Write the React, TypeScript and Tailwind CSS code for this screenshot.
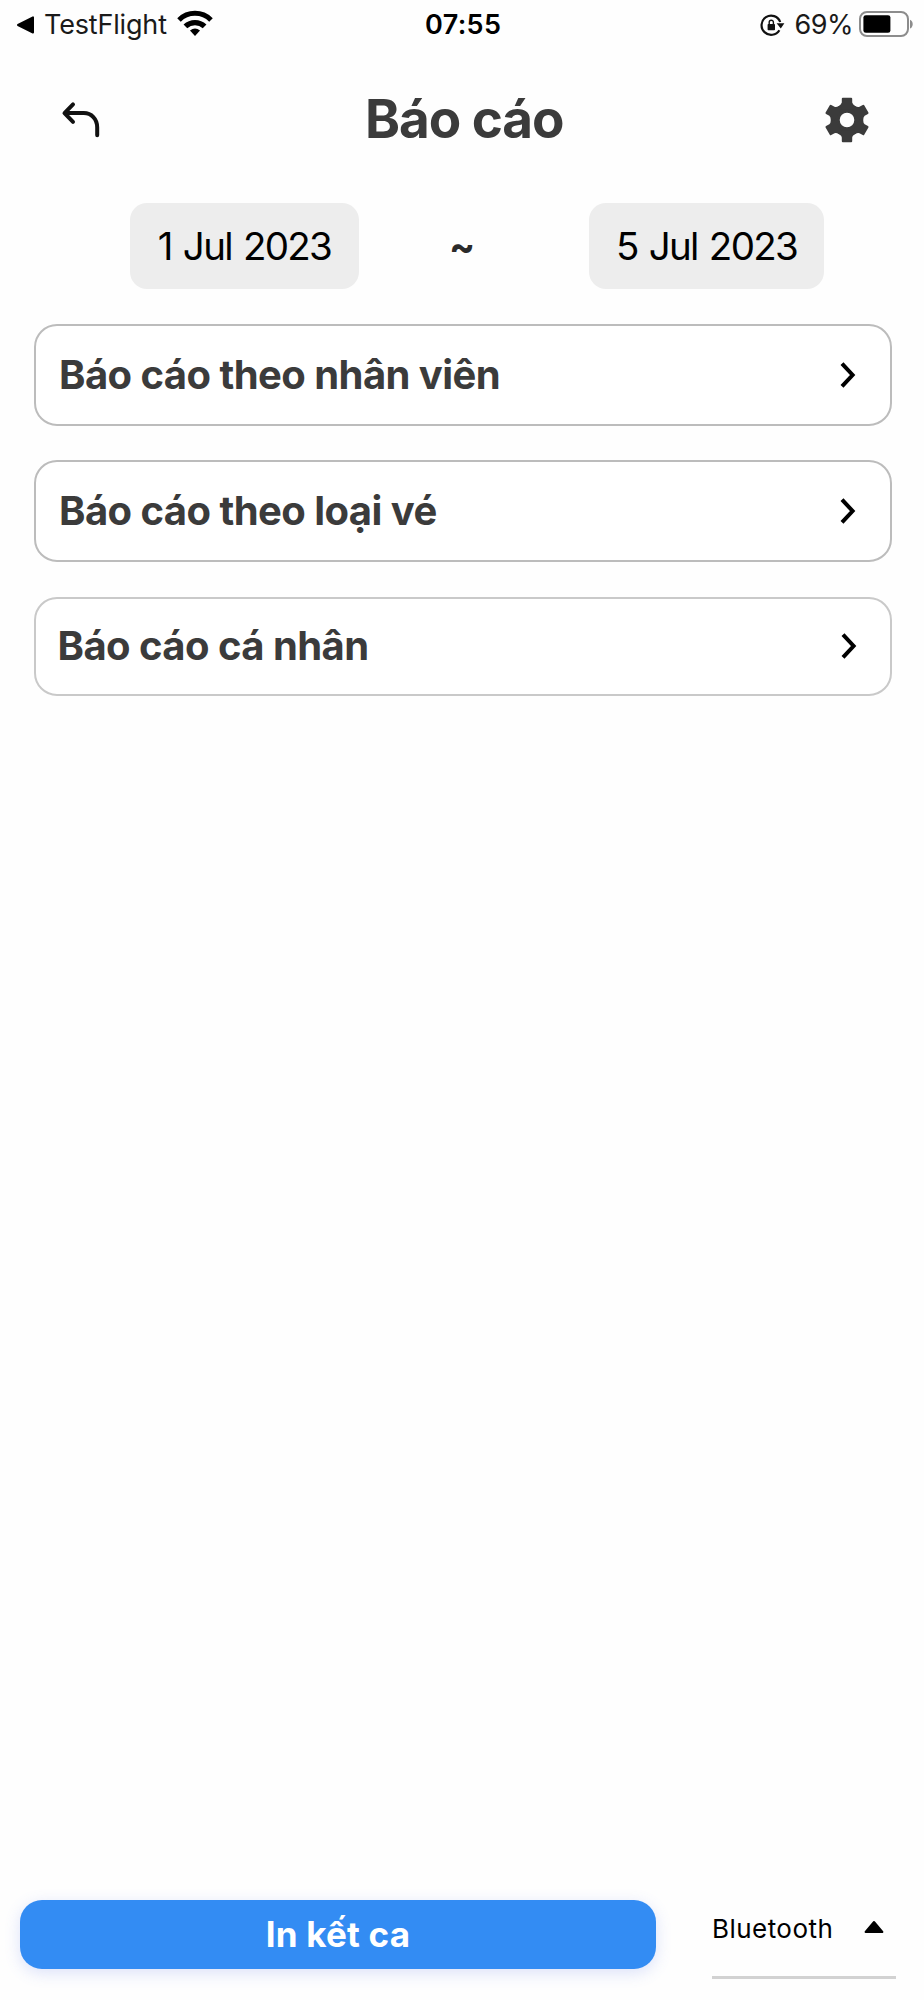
import clsx from "clsx";

interface ReportLink {
  label: string;
  height: string;
  textOffset: string;
  chevronOffset: string;
  border: string;
}

const REPORTS: ReportLink[] = [
  {
    label: "Báo cáo theo nhân viên",
    height: "h-[102px] mb-[34px]",
    textOffset: "pl-[23px]",
    chevronOffset: "mr-[33px]",
    border: "border-[#bcbcbc]",
  },
  {
    label: "Báo cáo theo loại vé",
    height: "h-[102px] mb-[35px]",
    textOffset: "pl-[23px] pt-px",
    chevronOffset: "mr-[33px]",
    border: "border-[#bcbcbc]",
  },
  {
    label: "Báo cáo cá nhân",
    height: "h-[99px]",
    textOffset: "pl-[21.5px]",
    chevronOffset: "mr-8",
    border: "border-[#c9c9c9]",
  },
];

const GEAR_TEETH = [0, 60, 120, 180, 240, 300];

function WifiIcon() {
  return (
    <svg width="36" height="28" viewBox="0 0 36 28" className="block" fill="none">
      <path d="M2 10.9A22.7 22.7 0 0 1 34 10.9" stroke="#000" strokeWidth="5" />
      <path d="M8.4 17.4A14 14 0 0 1 27.6 17.4" stroke="#000" strokeWidth="5.4" />
      <path d="M13 21.4Q18 17.6 23 21.4L18 27Z" fill="#000" />
    </svg>
  );
}

function RotationLockIcon() {
  return (
    <svg width="25" height="24" viewBox="0 0 25 24" className="block" fill="none">
      <path d="M19.4 17.2A9.6 9.6 0 1 1 20.2 9" stroke="#111" strokeWidth="2.2" />
      <path d="M16.6 10.2H24.4L20.8 15.6Z" fill="#111" />
      <rect x="7.6" y="11" width="7.4" height="6.2" rx="0.8" fill="#111" />
      <path d="M9.2 11.5V9.3A2.1 2.1 0 0 1 13.4 9.3V11.5" stroke="#111" strokeWidth="1.4" />
    </svg>
  );
}

function BatteryIcon() {
  return (
    <svg width="56" height="28" viewBox="0 0 56 28" className="block" fill="none">
      <rect x="2" y="2" width="48" height="24" rx="7" stroke="#8c8c8c" strokeWidth="2" />
      <rect x="5.4" y="5.2" width="27" height="17.6" rx="2.4" fill="#000" />
      <path d="M52 9.8C55.6 11 55.6 17.4 52 18.6Z" fill="#8c8c8c" />
    </svg>
  );
}

function BackIcon() {
  return (
    <svg width="40" height="38" viewBox="0 0 40 38" className="block" fill="none">
      <path
        d="M37.2 34.2V26.4C37.2 18 31.4 12.1 23.8 12.1H5M13 3.4L4.5 12.1L13 20.8"
        stroke="#111"
        strokeWidth="4"
        strokeLinecap="round"
        strokeLinejoin="round"
      />
    </svg>
  );
}

function GearIcon() {
  return (
    <svg width="48" height="48" viewBox="-24 -24 48 48" className="block">
      <circle r="11.8" fill="none" stroke="#3b3b3b" strokeWidth="9" />
      {GEAR_TEETH.map((angle) => (
        <path
          key={angle}
          d="M-4.2 -22.3H4.2Q5.2 -22.3 5.2 -21.2V-17.4Q5.4 -15.8 8.6 -13.2L7 -10.6H-7L-8.6 -13.2Q-5.4 -15.8 -5.2 -17.4V-21.2Q-5.2 -22.3 -4.2 -22.3Z"
          fill="#3b3b3b"
          transform={`rotate(${angle})`}
        />
      ))}
    </svg>
  );
}

function StatusBar() {
  return (
    <div className="flex h-[49px] items-center pl-4 pr-[10px] text-[27px] leading-none text-[#1a1a1a]">
      <div className="flex w-[409px] items-center">
        <svg width="20" height="20" viewBox="0 0 20 20" className="mr-2 block">
          <path
            d="M2 10L17 2.4V17.6Z"
            fill="#000"
            stroke="#000"
            strokeWidth="2"
            strokeLinejoin="round"
          />
        </svg>
        <span className="w-[132.5px] tracking-[-0.17px]">TestFlight</span>
        <span className="-mt-[3px]">
          <WifiIcon />
        </span>
      </div>
      <span className="font-semibold tracking-[0.35px] text-black">07:55</span>
      <div className="ml-auto flex items-center">
        <RotationLockIcon />
        <span className="ml-[10px] tracking-[-0.5px]">69%</span>
        <span className="-mt-0.5 ml-[5px]">
          <BatteryIcon />
        </span>
      </div>
    </div>
  );
}

function Header() {
  return (
    <header className="flex h-[141px] items-center justify-between pl-[60px] pr-[53.5px]">
      <button type="button" aria-label="Quay lại" className="w-[46px]">
        <BackIcon />
      </button>
      <h1 className="text-[53px] font-bold leading-none tracking-[-1.05px] text-[#3b3b3b]">
        Báo cáo
      </h1>
      <button type="button" aria-label="Cài đặt">
        <GearIcon />
      </button>
    </header>
  );
}

function DateRange() {
  return (
    <div className="mt-[12.5px] flex h-[86px] pl-[130px] text-[38.5px] leading-none text-black">
      <button
        type="button"
        className="flex w-[229px] items-center justify-center rounded-[17px] bg-[#ededed] pt-px tracking-[-1.7px] [word-spacing:2px]"
      >
        1 Jul 2023
      </button>
      <span className="flex w-[230px] items-center pl-[90px] pt-[2px] font-bold text-[#2b2b2b]">
        ~
      </span>
      <button
        type="button"
        className="flex w-[235px] items-center justify-center rounded-[17px] bg-[#ededed] pt-px tracking-[-1.7px] [word-spacing:2px]"
      >
        5 Jul 2023
      </button>
    </div>
  );
}

function ReportRow({ label, height, textOffset, chevronOffset, border }: ReportLink) {
  return (
    <button
      type="button"
      className={clsx(
        "flex w-full items-center justify-between rounded-[23px] border-2 bg-white",
        height,
        textOffset,
        border,
      )}
    >
      <span className="text-[40px] font-bold leading-none tracking-[-0.55px] text-[#3b3b3b]">
        {label}
      </span>
      <svg
        width="18"
        height="28"
        viewBox="0 0 18 28"
        fill="none"
        className={clsx("block", chevronOffset)}
      >
        <path d="M3 2.6L13.6 14L3 25.4" stroke="#000" strokeWidth="4" />
      </svg>
    </button>
  );
}

export default function App() {
  return (
    <div className="flex h-[2000px] w-[924px] flex-col overflow-hidden bg-[#fefefe] font-['Inter','Liberation_Sans',sans-serif]">
      <StatusBar />
      <Header />
      <DateRange />

      <main className="mt-[35px] flex flex-1 flex-col pl-[34px] pr-8">
        {REPORTS.map((report) => (
          <ReportRow key={report.label} {...report} />
        ))}
      </main>

      {/* Bottom bar */}
      <footer className="flex h-[100px] items-start pl-5">
        <button
          type="button"
          className="flex h-[69px] w-[636px] items-center justify-center rounded-[22px] bg-[#338cf3] text-[35px] font-bold leading-none tracking-[0.2px] text-white shadow-[0_4px_16px_rgba(80,110,230,0.2)]"
        >
          In kết ca
        </button>
        <div className="ml-14 flex h-[79px] w-[184px] items-start border-b-[3px] border-[#d2d2d2] pt-[15px]">
          <span className="w-[151px] text-[26px] leading-[27px] tracking-[0.45px] text-black">
            Bluetooth
          </span>
          <svg width="22" height="14" viewBox="0 0 22 14" className="mt-[5px] block">
            <path
              d="M11 2L19.4 12H2.6Z"
              fill="#000"
              stroke="#000"
              strokeWidth="2"
              strokeLinejoin="round"
            />
          </svg>
        </div>
      </footer>
    </div>
  );
}
